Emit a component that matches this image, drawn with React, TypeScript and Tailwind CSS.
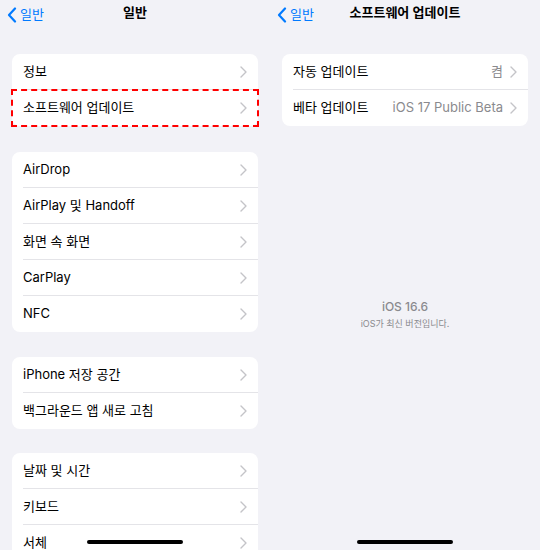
import React from "react";

const font = { fontFamily: '"Inter", "Noto Sans CJK KR", sans-serif' };

const Chevron: React.FC<{ className?: string }> = ({ className }) => (
  <svg width="7" height="12" viewBox="0 0 7 12" className={className} fill="none">
    <path d="M1 1l5 5-5 5" stroke="currentColor" strokeWidth="1.4" strokeLinecap="round" strokeLinejoin="round" />
  </svg>
);

const BackChevron = () => (
  <svg width="10" height="16" viewBox="0 0 10 16" fill="none">
    <path d="M8 1.5L2 8l6 6.5" stroke="#007aff" strokeWidth="2.2" strokeLinecap="round" strokeLinejoin="round" />
  </svg>
);

interface RowProps {
  label: string;
  value?: string;
  last?: boolean;
  highlight?: boolean;
}

const Row: React.FC<RowProps> = ({ label, value, last, highlight }) => (
  <div className={`relative flex h-9 shrink-0 items-center pl-[11px] ${highlight ? "outline-2 outline-dashed outline-[#ff0000] -outline-offset-1" : ""}`}>
    <div className={`flex h-full flex-1 items-center pr-[11px] ${last ? "" : "border-b border-[#e4e4e8]"}`}>
      <span className="flex-1 text-[13px] text-black">{label}</span>
      {value && <span className="mr-[7px] text-[13px] text-[#8a8a8e]">{value}</span>}
      <Chevron className="text-[#c4c4c8]" />
    </div>
  </div>
);

const Group: React.FC<{ rows: RowProps[]; className?: string }> = ({ rows, className }) => (
  <div className={`mx-3 shrink-0 rounded-lg bg-white ${className ?? ""}`}>
    {rows.map((r, i) => (
      <Row key={r.label} {...r} last={i === rows.length - 1} />
    ))}
  </div>
);

const Header: React.FC<{ title: string }> = ({ title }) => (
  <div className="relative flex h-[26px] shrink-0 items-center justify-center">
    <div className="absolute left-[7px] top-[5px] flex items-center gap-[3px]">
      <BackChevron />
      <span className="text-[13px] text-[#007aff]">일반</span>
    </div>
    <span className="text-[13px] font-semibold text-black">{title}</span>
  </div>
);

const HomeBar = () => (
  <div className="absolute bottom-[6px] left-1/2 h-[4px] w-[96px] -translate-x-1/2 rounded-full bg-black" />
);

export default function App() {
  return (
    <div className="flex h-[550px] w-[540px] overflow-hidden bg-[#f2f2f7]" style={font}>
      <div className="relative flex w-[270px] flex-col">
        <Header title="일반" />
        <div className="mt-[28px] flex shrink-0 flex-col">
          <Group rows={[{ label: "정보" }, { label: "소프트웨어 업데이트", highlight: true }]} />
          <Group
            className="mt-[26px]"
            rows={[
              { label: "AirDrop" },
              { label: "AirPlay 및 Handoff" },
              { label: "화면 속 화면" },
              { label: "CarPlay" },
              { label: "NFC" },
            ]}
          />
          <Group className="mt-[25px]" rows={[{ label: "iPhone 저장 공간" }, { label: "백그라운드 앱 새로 고침" }]} />
          <Group className="mt-[24px]" rows={[{ label: "날짜 및 시간" }, { label: "키보드" }, { label: "서체" }]} />
        </div>
        <HomeBar />
      </div>
      <div className="relative flex w-[270px] flex-col">
        <Header title="소프트웨어 업데이트" />
        <div className="mt-[28px] shrink-0">
          <Group
            rows={[
              { label: "자동 업데이트", value: "켬" },
              { label: "베타 업데이트", value: "iOS 17 Public Beta" },
            ]}
          />
        </div>
        <div className="mt-[172px] flex shrink-0 flex-col items-center">
          <span className="text-[12px] font-medium text-[#8a8a8e]">iOS 16.6</span>
          <span className="mt-[1px] text-[9px] text-[#8a8a8e]">iOS가 최신 버전입니다.</span>
        </div>
        <HomeBar />
      </div>
    </div>
  );
}
